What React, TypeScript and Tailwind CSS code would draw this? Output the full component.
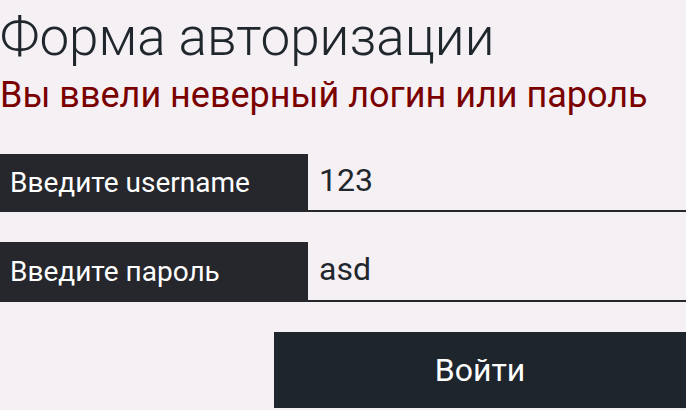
import React from "react";

export default function App() {
  return (
    <div className="min-h-screen w-[686px] h-[410px] overflow-hidden bg-[#f5f0f4] font-['Roboto',sans-serif]">
      <h1 className="pt-[6px] text-[53px] leading-[62px] font-light text-[#1f272d]">
        Форма авторизации
      </h1>
      <p className="mt-[6px] text-[36px] leading-[42px] text-[#7a0000]">
        Вы ввели неверный логин или пароль
      </p>
      <form className="mt-[38px] flex flex-col" onSubmit={(e) => e.preventDefault()}>
        <div className="flex h-[58px]">
          <label className="flex w-[308px] items-center bg-[#25272c] pl-[10px] text-[28px] text-white">
            Введите username
          </label>
          <input
            defaultValue="123"
            className="flex-1 min-w-0 border-b-2 border-[#25272c] bg-transparent pl-[11px] pb-[4px] text-[32px] text-[#1f272d] outline-none"
          />
        </div>
        <div className="mt-[30px] flex h-[60px]">
          <label className="flex w-[308px] items-center bg-[#25272c] pl-[10px] text-[28px] text-white">
            Введите пароль
          </label>
          <input
            defaultValue="asd"
            className="flex-1 min-w-0 border-b-2 border-[#25272c] bg-transparent pl-[11px] pb-[4px] text-[32px] text-[#1f272d] outline-none"
          />
        </div>
        <div className="mt-[30px] flex justify-end">
          <button
            type="submit"
            className="h-[76px] w-[412px] bg-[#1e252c] text-[32px] text-white"
          >
            Войти
          </button>
        </div>
      </form>
    </div>
  );
}
